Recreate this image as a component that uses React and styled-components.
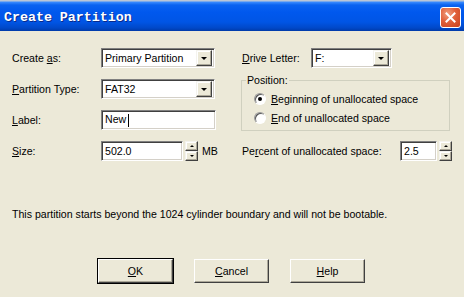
import React from "react";
import styled, { createGlobalStyle } from "styled-components";

//-----------------------------------------------------------------------------------------------

const GlobalStyle = createGlobalStyle`
	html, body {
		margin: 0;
		padding: 0;
		background: #ece9d8;
	}
	body {
		font-family: "Liberation Sans", Arial, sans-serif;
		font-size: 10.6px;
		color: #000;
	}
`;

const Dialog = styled.div`
	width: 464px;
	height: 297px;
	display: flex;
	flex-direction: column;
	background: #ece9d8;
	overflow: hidden;
`;

const TitleBar = styled.div`
	height: 31px;
	box-sizing: border-box;
	display: flex;
	align-items: center;
	justify-content: space-between;
	padding: 4px 3px 0 4px;
	background: linear-gradient(
		to bottom,
		#b9c6d6 0px,
		#b9c6d6 1px,
		#3a8cff 2px,
		#0a63f0 5px,
		#0058ee 12px,
		#0055e5 22px,
		#0048c8 28px,
		#003aa8 31px
	);
`;

const Title = styled.span`
	font-family: "Liberation Mono", "Courier New", monospace;
	font-weight: bold;
	font-size: 13.3px;
	color: #fff;
	text-shadow: 1px 1px 0 #0a2a8a;
`;

const CloseButton = styled.div`
	width: 21px;
	height: 21px;
	box-sizing: border-box;
	border: 1px solid #fff;
	border-radius: 3px;
	background: radial-gradient(circle at 35% 30%, #f0a080 0%, #e0603a 45%, #c8401c 100%);
	display: flex;
	align-items: center;
	justify-content: center;
`;

const Body = styled.div`
	flex: 1;
	display: flex;
	flex-direction: column;
	padding: 17px 12px 0 12px;
`;

const Columns = styled.div`
	display: flex;
`;

const LeftForm = styled.div`
	width: 230px;
	display: grid;
	grid-template-columns: 89px auto;
	grid-auto-rows: 20px;
	row-gap: 11px;
	align-items: center;
`;

const RightForm = styled.div`
	display: flex;
	flex-direction: column;
`;

const Label = styled.span`
	white-space: nowrap;
	width: ${(p) => (p.$w ? `${p.$w}px` : "auto")};
	u {
		text-decoration: underline;
	}
`;

const FieldRow = styled.div`
	display: flex;
	align-items: center;
	margin-top: ${(p) => p.$top || 0}px;
`;

const Sunken = styled.div`
	width: ${(p) => p.$w}px;
	height: 20px;
	box-sizing: border-box;
	background: #fff;
	border-top: 1px solid #808080;
	border-left: 1px solid #808080;
	border-right: 1px solid #fff;
	border-bottom: 1px solid #fff;
	box-shadow: inset 1px 1px 0 #404040, inset -1px -1px 0 #d4d0c8;
	display: flex;
	align-items: center;
	padding: 0 2px 0 3px;
`;

const FieldText = styled.span`
	flex: 1;
	white-space: nowrap;
`;

const Caret = styled.span`
	display: inline-block;
	width: 1px;
	height: 13px;
	background: #000;
	margin-left: 2px;
	vertical-align: middle;
`;

const ArrowButton = styled.div`
	width: 16px;
	height: 16px;
	box-sizing: border-box;
	background: #ece9d8;
	border-top: 1px solid #f4f3ee;
	border-left: 1px solid #f4f3ee;
	border-right: 1px solid #404040;
	border-bottom: 1px solid #404040;
	box-shadow: inset -1px -1px 0 #aca899, inset 1px 1px 0 #fff;
	display: flex;
	align-items: center;
	justify-content: center;
`;

const Triangle = styled.span`
	width: 0;
	height: 0;
	border-left: ${(p) => p.$s}px solid transparent;
	border-right: ${(p) => p.$s}px solid transparent;
	${(p) => (p.$up ? "border-bottom" : "border-top")}: ${(p) => p.$s}px solid #000;
`;

const Spin = styled.div`
	display: flex;
	flex-direction: column;
	margin-left: 2px;
`;

const SpinButton = styled(ArrowButton)`
	width: 13px;
	height: 10px;
`;

const Unit = styled.span`
	margin-left: 4px;
`;

const GroupBox = styled.fieldset`
	margin: 6px 0 0 -1px;
	width: 209px;
	height: 57px;
	box-sizing: border-box;
	padding: 3px 0 0 12px;
	border: 1px solid #d0d0bf;
	legend {
		padding: 0 1px;
		margin-left: -8px;
	}
`;

const RadioRow = styled.label`
	display: flex;
	align-items: center;
	gap: 5px;
	height: 19px;
`;

const RadioCircle = styled.span`
	width: 12px;
	height: 12px;
	box-sizing: border-box;
	border-radius: 50%;
	border: 1px solid #999;
	border-right-color: #fff;
	border-bottom-color: #fff;
	background: #fff;
	box-shadow: inset 1px 1px 0 #555;
	display: flex;
	align-items: center;
	justify-content: center;
	&::after {
		content: "";
		width: 4px;
		height: 4px;
		border-radius: 50%;
		background: ${(p) => (p.$checked ? "#000" : "transparent")};
	}
`;

const Message = styled.p`
	margin: 47px 0 0 0;
	white-space: nowrap;
`;

const Buttons = styled.div`
	display: flex;
	gap: 21px;
	margin: 39px 0 0 86px;
`;

const Button = styled.button`
	width: 75px;
	height: 24px;
	box-sizing: border-box;
	font-family: inherit;
	font-size: 10.6px;
	background: #ece9d8;
	color: #000;
	border-top: 1px solid #fff;
	border-left: 1px solid #fff;
	border-right: 1px solid #404040;
	border-bottom: 1px solid #404040;
	box-shadow: inset -1px -1px 0 #aca899;
	outline: ${(p) => (p.$default ? "1px solid #000" : "none")};
	padding: 0;
`;

//-----------------------------------------------------------------------------------------------

function Combo({ width, value }) {
	return (
		<Sunken $w={width}>
			<FieldText>{value}</FieldText>
			<ArrowButton>
				<Triangle $s={3.5} />
			</ArrowButton>
		</Sunken>
	);
}

function SpinField({ width, value }) {
	return (
		<FieldRow>
			<Sunken $w={width}>
				<FieldText>{value}</FieldText>
			</Sunken>
			<Spin>
				<SpinButton>
					<Triangle $s={2} $up />
				</SpinButton>
				<SpinButton>
					<Triangle $s={2} />
				</SpinButton>
			</Spin>
		</FieldRow>
	);
}

export default function App() {
	return (
		<>
			<GlobalStyle />
			<Dialog>
				<TitleBar>
					<Title>Create Partition</Title>
					<CloseButton>
						<svg width="11" height="11" viewBox="0 0 11 11">
							<path d="M1.5 1.5 L9.5 9.5 M9.5 1.5 L1.5 9.5" stroke="#fff" strokeWidth="2" strokeLinecap="square" />
						</svg>
					</CloseButton>
				</TitleBar>
				<Body>
					<Columns>
						<LeftForm>
							<Label>
								Create <u>a</u>s:
							</Label>
							<Combo width={114} value="Primary Partition" />
							<Label>
								<u>P</u>artition Type:
							</Label>
							<Combo width={114} value="FAT32" />
							<Label>
								<u>L</u>abel:
							</Label>
							<Sunken $w={115}>
								<FieldText>
									New
									<Caret />
								</FieldText>
							</Sunken>
							<Label>
								<u>S</u>ize:
							</Label>
							<FieldRow>
								<SpinField width={82} value="502.0" />
								<Unit>MB</Unit>
							</FieldRow>
						</LeftForm>
						<RightForm>
							<FieldRow>
								<Label $w={69}>
									<u>D</u>rive Letter:
								</Label>
								<Combo width={81} value="F:" />
							</FieldRow>
							<GroupBox>
								<legend>Position:</legend>
								<RadioRow>
									<RadioCircle $checked />
									<span>
										<u>B</u>eginning of unallocated space
									</span>
								</RadioRow>
								<RadioRow>
									<RadioCircle />
									<span>
										<u>E</u>nd of unallocated space
									</span>
								</RadioRow>
							</GroupBox>
							<FieldRow $top={10}>
								<Label $w={158}>
									Pe<u>r</u>cent of unallocated space:
								</Label>
								<SpinField width={37} value="2.5" />
							</FieldRow>
						</RightForm>
					</Columns>
					<Message>
						This partition starts beyond the 1024 cylinder boundary and will not be bootable.
					</Message>
					<Buttons>
						<Button $default>
							<u>O</u>K
						</Button>
						<Button>
							<u>C</u>ancel
						</Button>
						<Button>
							<u>H</u>elp
						</Button>
					</Buttons>
				</Body>
			</Dialog>
		</>
	);
}
